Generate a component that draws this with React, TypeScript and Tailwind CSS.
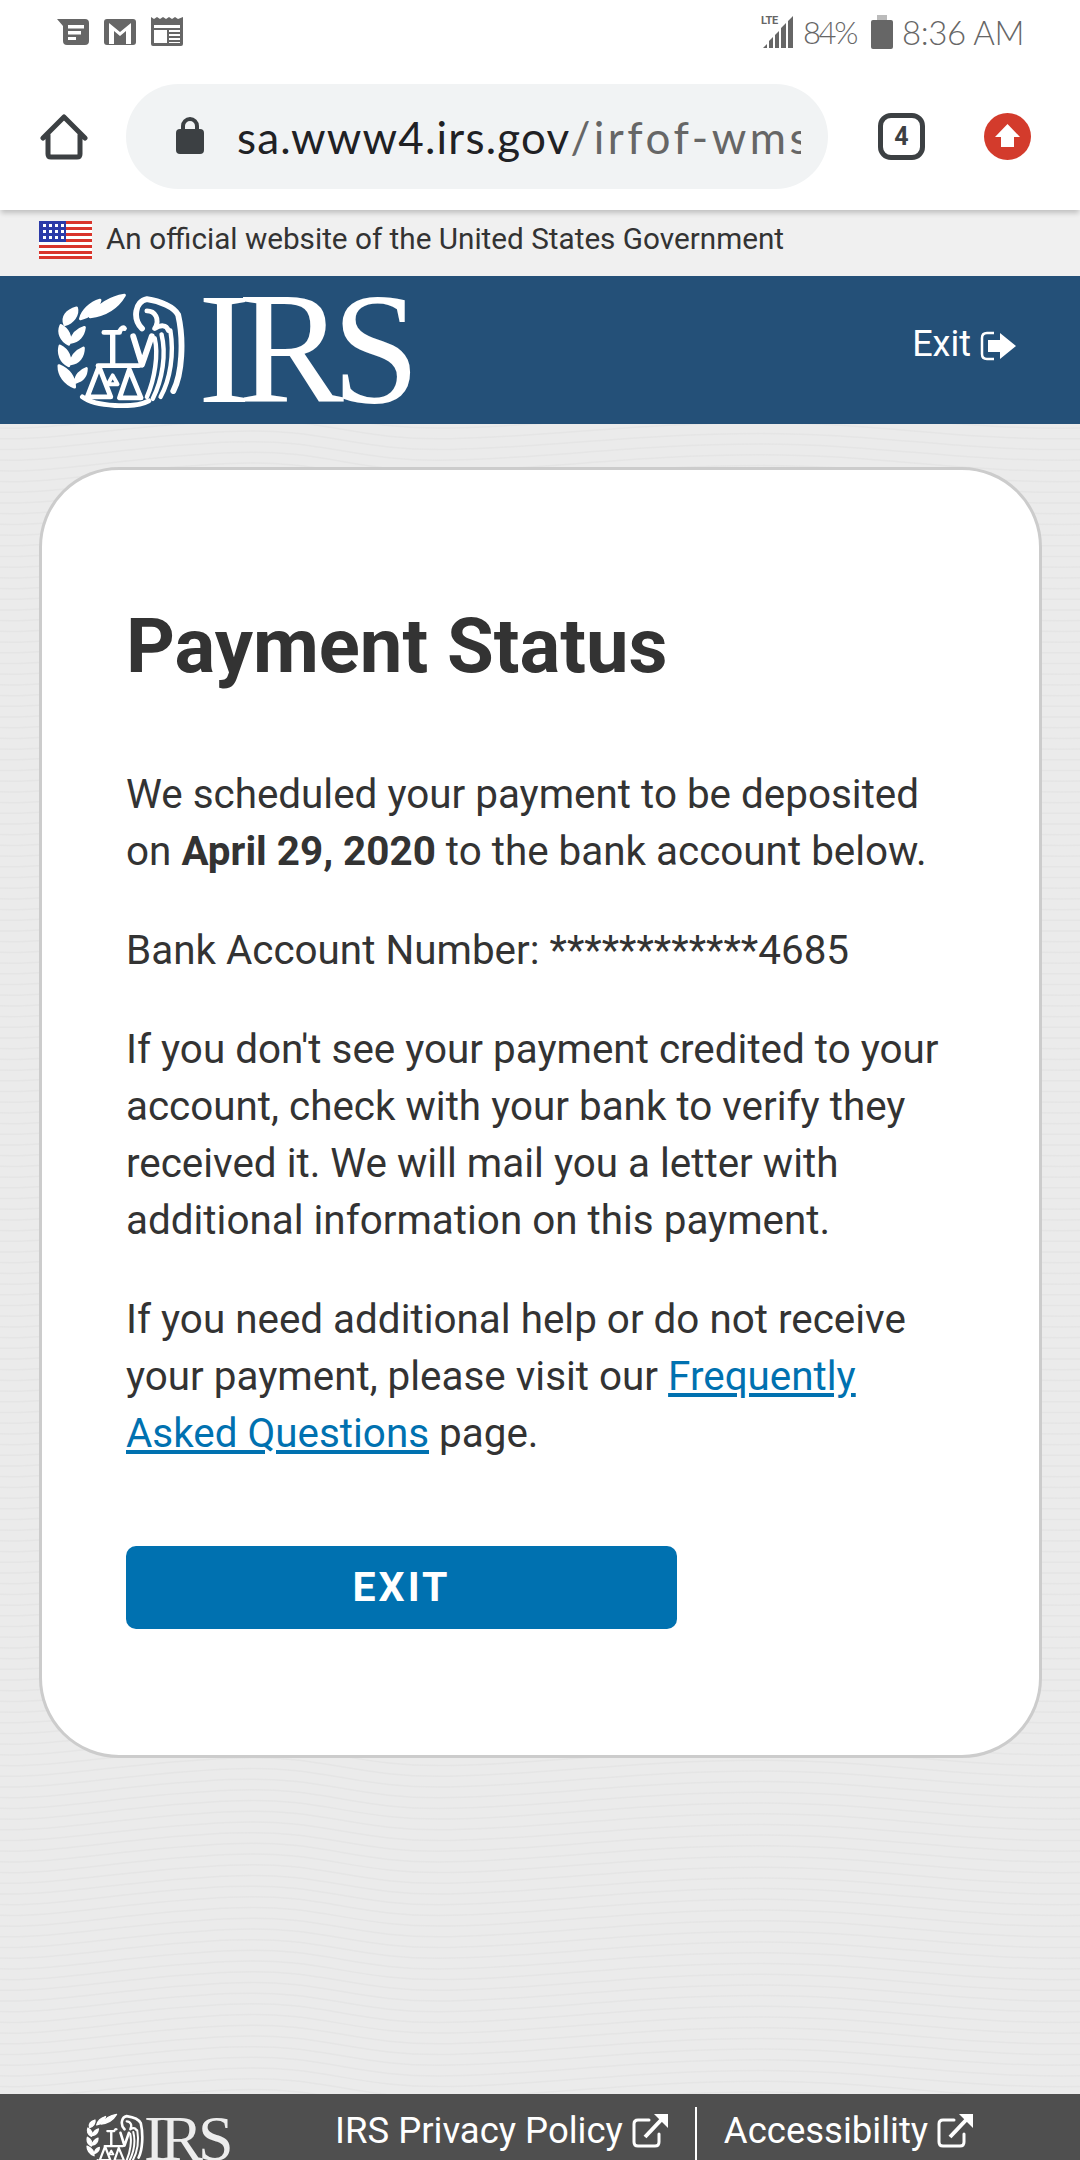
const Seal = ({ className }: { className: string }) => (
  <svg viewBox="16 11 131 118" className={className}>
    <g fill="#fff" stroke="#fff" strokeWidth="3" strokeLinejoin="round">
      <path d="M50 36 C60 22 72 16 85 14 C78 26 66 34 50 36Z" />
      <path d="M40 38 C42 30 50 22 60 19 C58 28 50 36 40 38Z" />
      <path d="M24 44 C21 36 26 30 36 27 C38 34 32 42 24 44Z" />
      <path d="M28 64 C20 60 17 52 20 45 C27 49 31 56 28 64Z M30 62 C32 54 37 49 44 47 C43 55 38 61 30 62Z" />
      <path d="M28 86 C20 82 17 74 19 66 C27 70 31 78 28 86Z M30 84 C31 76 36 71 43 68 C43 77 38 83 30 84Z" />
      <path d="M34 108 C24 104 18 96 18 86 C28 90 34 98 34 108Z M35 103 C35 96 40 91 46 89 C46 96 42 101 35 103Z" />
    </g>
    <g fill="none" stroke="#fff" strokeLinecap="round" strokeLinejoin="round">
      <path strokeWidth="5" d="M64 52 H80 C80 50 83 46 85 48" />
      <path strokeWidth="5.5" d="M73 53 V85" />
      <path strokeWidth="5" d="M58 86 H100" />
      <path strokeWidth="5" d="M59 87 L47 118 H71 L59 87Z" />
      <path strokeWidth="4" d="M73 96 L78 105 H68Z" />
      <path strokeWidth="5" d="M90 90 L80 119 H102 L90 90Z" />
      <path strokeWidth="5" d="M42 118 C55 128 95 130 110 122" />
      <path strokeWidth="6" d="M94 56 L103 85 L113 56" />
      <path strokeWidth="6" d="M103 48 C93 38 96 20 108 18 C122 20 136 26 140 34 C146 60 144 95 135 112" />
      <path strokeWidth="5" d="M108 30 C116 30 122 38 116 48 C122 44 128 44 130 50" />
      <path strokeWidth="4.5" d="M116 58 C120 74 116 100 108 118" />
      <path strokeWidth="4.5" d="M123 54 C128 74 124 100 114 120" />
      <path strokeWidth="4.5" d="M132 50 C136 74 132 100 122 118" />
    </g>
  </svg>
);

const ExternalIcon = () => (
  <svg viewBox="0 0 36 36" className="w-[36px] h-[36px] shrink-0" fill="none" stroke="#fff">
    <path strokeWidth="3" strokeLinecap="round" d="M17 7 H6 Q2 7 2 11 V29 Q2 33 6 33 H23 Q27 33 27 29 V21" />
    <path strokeWidth="4" d="M13 24 L30 6" />
    <path fill="#fff" stroke="none" d="M22 1 H36 V15Z" />
  </svg>
);

const Flag = () => (
  <svg viewBox="0 0 53 38" className="w-[53px] h-[38px] shrink-0">
    <rect width="53" height="38" fill="#fff" />
    {[0, 6, 12, 18, 24, 30, 35].map((y) => (
      <rect key={y} y={y} width="53" height="3" fill="#d9342b" />
    ))}
    <rect width="27" height="21" fill="#2b3aa8" />
    {[3, 9, 15].map((y) =>
      [4, 10, 16, 22].map((x) => <rect key={`${x}-${y}`} x={x} y={y} width="3" height="3" fill="#fff" />),
    )}
  </svg>
);

const Waves = () => (
  <svg className="absolute inset-0 w-full h-full" preserveAspectRatio="none" viewBox="0 0 1080 1670" fill="none" stroke="#e5e5e5" strokeWidth="1.5">
    {Array.from({ length: 160 }, (_, i) => (
      <path key={i} d={`M0 ${i * 10.7 + 4} C60 ${i * 10.7 + 6} 130 ${i * 10.7 - 10} 230 ${i * 10.7 - 14} S350 ${i * 10.7 + 6} 450 ${i * 10.7 + 4} S640 ${i * 10.7 - 12} 760 ${i * 10.7 - 12} S960 ${i * 10.7 + 6} 1080 ${i * 10.7 + 4}`} />
    ))}
  </svg>
);

export default function App() {
  return (
    <div className="w-[1080px] h-[2160px] flex flex-col overflow-hidden bg-white font-['Roboto',sans-serif] text-[#333]">
      {/* Status bar */}
      <div className="h-[60px] shrink-0 flex items-start justify-between pl-[57px] pr-[56px] pt-[15px] text-[#666] font-['Lato',sans-serif]">
        <div className="flex items-center gap-[15px] pt-[2px]">
          <svg viewBox="0 0 32 26" className="w-[32px] h-[26px]">
            <path fill="#666" d="M0 0 H28 Q32 0 32 4 V22 Q32 26 28 26 H10 Q6 26 6 22 V7Z" />
            <path fill="#fff" d="M11 6 H27 V9.5 H11Z M11 12 H24 V15.5 H11Z M11 18 H19 V21 H11Z" />
          </svg>
          <svg viewBox="0 0 32 26" className="w-[32px] h-[26px]">
            <rect width="32" height="26" rx="3" fill="#666" />
            <path fill="#fff" d="M5 4 L16 13 L27 4 V25 H22 V12 L16 17 L10 12 V25 H5Z" />
          </svg>
          <svg viewBox="0 0 32 29" className="w-[32px] h-[29px]">
            <path fill="#666" d="M0 0 L3 2 L6 0 L9 2 L12 0 L15 2 L18 0 L21 2 L24 0 L27 2 L32 0 V27 Q32 29 30 29 H2 Q0 29 0 27Z" />
            <path fill="#fff" d="M3 8 H29 V11 H3Z M3 13 H16 V26 H3Z M18 13 H29 V15 H18Z M18 17 H29 V19 H18Z M18 21 H29 V23 H18Z M18 25 H29 V26 H18Z" />
          </svg>
        </div>
        <div className="flex items-center">
          <div className="relative w-[32px] h-[32px]">
            <svg viewBox="0 0 32 32" className="w-[32px] h-[32px]">
              <path fill="#666" d="M1 32 L5 28 V32Z M7 32 V25 L11 21 V32Z M13 32 V19 L17 15 V32Z M19 32 V12 L24 7 V32Z M26 32 V5 L31 0 V32Z" />
            </svg>
            <span className="absolute left-[-1px] top-[0px] text-[11px] leading-[10px] font-bold text-[#666] font-['Roboto',sans-serif] tracking-[-0.3px]">LTE</span>
          </div>
          <span className="ml-[9px] text-[31px] leading-[32px] font-light tracking-[-2.4px] w-[57px]">84%</span>
          <svg viewBox="0 0 22 34" className="w-[22px] h-[34px] ml-[11px]">
            <rect x="6" width="10" height="5" fill="#bbb" />
            <path fill="#666" d="M2 5 H20 Q22 5 22 7 V32 Q22 34 20 34 H2 Q0 34 0 32 V7 Q0 5 2 5Z" />
          </svg>
          <span className="ml-[9px] text-[33px] leading-[32px] font-light tracking-[-0.4px]">8:36 AM</span>
        </div>
      </div>

      {/* Toolbar */}
      <div className="relative z-10 h-[150px] shrink-0 bg-white flex items-center pl-[40px] shadow-[0_4px_5px_-1px_rgba(0,0,0,0.2)]">
        <svg viewBox="0 0 48 48" className="w-[48px] h-[48px] mt-[3px] shrink-0" fill="none" stroke="#3c4043" strokeWidth="5" strokeLinejoin="round" strokeLinecap="round">
          <path d="M3 25 L24 4 L45 25 M8 22 V41 Q8 44 11 44 H37 Q40 44 40 41 V22" />
        </svg>
        <div className="ml-[38px] mt-[3px] w-[702px] h-[105px] shrink-0 rounded-full bg-[#f1f3f4] flex items-center pl-[50px]">
          <svg viewBox="0 0 28 37" className="w-[28px] h-[37px] shrink-0 mb-[2px]">
            <path fill="none" stroke="#3c4043" strokeWidth="4" d="M7 16 V9 A7 7 0 0 1 21 9 V16" />
            <rect y="12" width="28" height="25" rx="4" fill="#3c4043" />
          </svg>
          <div className="ml-[33px] w-[564px] overflow-hidden whitespace-nowrap text-[44px] leading-[54px] tracking-[3.5px] font-['Lato',sans-serif] text-[#666]">
            <span className="text-[#202124] tracking-[1.2px]">sa.www4.irs.gov</span>/irfof-wms
          </div>
        </div>
        <div className="ml-[50px] mt-[3px] w-[47px] h-[47px] shrink-0 rounded-[13px] border-[5px] border-[#3c4043] flex items-center justify-center text-[25px] font-bold text-[#3c4043] font-['Roboto',sans-serif]">
          4
        </div>
        <svg viewBox="0 0 47 47" className="ml-[59px] mt-[3px] w-[47px] h-[47px] shrink-0">
          <circle cx="23.5" cy="23.5" r="23.5" fill="#d33b2c" />
          <path fill="#fff" d="M23.5 11 L36 24 H30 V34 H17 V24 H11Z" />
        </svg>
      </div>

      {/* Gov banner */}
      <div className="h-[66px] shrink-0 bg-[#f0f0f0] flex items-center pl-[39px] pb-[7px] gap-[14px] text-[29.7px] text-[#333]">
        <Flag />
        <span>An official website of the United States Government</span>
      </div>

      {/* Header */}
      <div className="h-[148px] shrink-0 bg-[#245078] flex items-center justify-between pl-[57px] pr-[64px] text-white">
        <div className="flex items-center">
          <Seal className="w-[128px] h-[116px] blur-[0.5px]" />
          <span className="ml-[13px] mb-[3px] font-['Liberation_Serif',serif] text-[158px] leading-[120px] tracking-[-12px]">IRS</span>
        </div>
        <div className="flex items-center -mt-[12px] gap-[9px]">
          <span className="text-[36px] leading-[44px]">Exit</span>
          <svg viewBox="0 0 36 30" className="w-[36px] h-[30px] mt-[4px]">
            <path fill="none" stroke="#fff" strokeWidth="2.5" d="M14 2 H7 Q2 2 2 7 V23 Q2 28 7 28 H14" />
            <path fill="#fff" d="M8 9 H20 V2 L36 15 L20 28 V21 H8Z" />
          </svg>
        </div>
      </div>

      {/* Main */}
      <div className="relative flex-1 min-h-0 bg-[#ebebeb] pt-[43px] pl-[39px]">
        <Waves />
        <div className="relative w-[1003px] rounded-[80px] border-[3px] border-[#ccc] bg-white pl-[84px] pr-[60px] pt-[136px] pb-[126px]">
          <h1 className="text-[76px] leading-[80px] font-bold text-[#333]">Payment Status</h1>
          <div className="mt-[80px] flex flex-col gap-[42px] text-[40.4px] leading-[57px] text-[#333]">
            <p>
              We scheduled your payment to be deposited
              <br />
              on <b>April 29, 2020</b> to the bank account below.
            </p>
            <p>Bank Account Number: ************4685</p>
            <p>
              If you don't see your payment credited to your
              <br />
              account, check with your bank to verify they
              <br />
              received it. We will mail you a letter with
              <br />
              additional information on this payment.
            </p>
            <p>
              If you need additional help or do not receive
              <br />
              your payment, please visit our{" "}
              <a className="text-[#0071b0] underline" href="#">
                Frequently
                <br />
                Asked Questions
              </a>{" "}
              page.
            </p>
          </div>
          <button className="mt-[84px] w-[551px] h-[83px] rounded-[10px] bg-[#0071b0] text-white text-[41px] font-bold tracking-[3px] flex items-center justify-center">
            EXIT
          </button>
        </div>
      </div>

      {/* Footer */}
      <div className="h-[66px] shrink-0 bg-[#4f4f4f] flex items-start overflow-hidden text-white pl-[86px]">
        <div className="flex items-center pt-[19px] w-[249px] shrink-0">
          <Seal className="w-[58px] h-[52px] blur-[0.5px] shrink-0" />
          <span className="font-['Liberation_Serif',serif] text-[64px] leading-[52px] tracking-[-5px] opacity-90">IRS</span>
        </div>
        <div className="flex items-center h-[66px] text-[36.5px] leading-[44px] pt-[8px]">
          <span>IRS Privacy Policy</span>
          <span className="ml-[9px]"><ExternalIcon /></span>
          <span className="ml-[27px] self-end w-[2px] h-[53px] bg-white" />
          <span className="ml-[27px]">Accessibility</span>
          <span className="ml-[9px]"><ExternalIcon /></span>
        </div>
      </div>
    </div>
  );
}
